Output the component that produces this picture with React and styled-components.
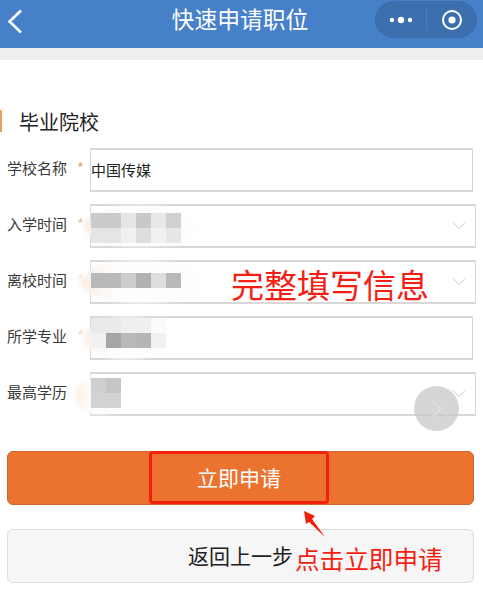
import React from "react";
import styled, { createGlobalStyle } from "styled-components";

const Global = createGlobalStyle`
  html, body { margin: 0; padding: 0; background: #fff; }
  body { font-family: "Noto Sans CJK SC", "Liberation Sans", sans-serif; }
`;

const Page = styled.div`
  position: relative;
  width: 483px;
  height: 604px;
  overflow: hidden;
  background: #fff;
`;

const Header = styled.header`
  height: 48px;
  background: #4580c8;
  display: flex;
  align-items: flex-start;
  justify-content: space-between;
  padding: 1px 6px 0 7px;
  box-sizing: border-box;
`;
const Back = styled.svg`
  width: 16px;
  height: 26px;
  margin-top: 8px;
`;
const Title = styled.h1`
  position: absolute;
  left: 0;
  right: 3px;
  top: 0;
  height: 38px;
  margin: 0;
  text-align: center;
  color: #fff;
  font-size: 22.8px;
  font-weight: 400;
  line-height: 37px;
`;
const Capsule = styled.div`
  width: 102px;
  height: 37px;
  border-radius: 19px;
  background: #3c6fae;
  display: grid;
  grid-template-columns: 51px 1px 50px;
  align-items: center;
  justify-items: center;
`;
const CapsuleRule = styled.span`
  width: 1px;
  height: 23px;
  background: #4d7db8;
`;
const Strip = styled.div`
  height: 12px;
  background: #eeeeee;
`;

const SectionTitle = styled.h2`
  margin: 50px 0 16px;
  height: 22px;
  border-left: 2px solid #e3a35c;
  padding-left: 17px;
  font-size: 20px;
  font-weight: 400;
  line-height: 24px;
  color: #222;
`;

const Form = styled.div`
  display: flex;
  flex-direction: column;
  gap: 12px;
`;
const Row = styled.div`
  display: flex;
  align-items: center;
  height: 44px;
  padding-left: 7px;
  position: relative;
`;
const Label = styled.label`
  width: 61px;
  margin-bottom: 4px;
  font-size: 15px;
  color: #3a3a3a;
  line-height: 20px;
  white-space: nowrap;
`;
const Star = styled.span`
  width: 22px;
  margin-bottom: 4px;
  padding-left: 9px;
  box-sizing: border-box;
  color: #e8a66f;
  opacity: ${(p) => p.$fade};
  font-size: 15px;
  line-height: 20px;
`;
const Field = styled.div`
  box-sizing: border-box;
  width: ${(p) => (p.$select ? 386 : 383)}px;
  height: 44px;
  border: 1px solid #d8d8d8;
  border-width: 2px 1px 2px 1px;
  background: #fff;
  padding: 0 0 2px 0;
  display: flex;
  align-items: center;
  justify-content: space-between;
  font-size: 15px;
  color: #222;
`;
const Chevron = styled.svg`
  width: 14px;
  height: 9px;
  margin-right: 9px;
`;

const Smudge = styled.div`
  position: absolute;
  left: ${(p) => p.$x}px;
  top: ${(p) => p.$y}px;
  width: ${(p) => p.$w}px;
  height: ${(p) => p.$h}px;
  border-radius: 50%;
  background: linear-gradient(90deg, #fbeee4 0, #fbf3ec 12%, #fdfdfd 30%);
  filter: blur(2px);
`;
const Mosaic = styled.div`
  position: absolute;
  left: 91px;
  top: ${(p) => p.$y}px;
  display: grid;
  grid-template-columns: repeat(${(p) => p.$cols}, 15px);
  grid-auto-rows: 15px;
  filter: blur(0.4px);
`;
const Cell = styled.i`
  display: block;
  background: ${(p) => p.$c};
`;

const Buttons = styled.div`
  margin: 35px 7px 0 7px;
  display: flex;
  flex-direction: column;
  gap: 24px;
`;
const Primary = styled.button`
  position: relative;
  height: 54px;
  width: 467px;
  border: 1px solid #c9662e;
  border-radius: 6px;
  background: #ec7230;
  color: #fff;
  font: inherit;
  font-size: 21px;
  padding: 0 3px 3px 0;
`;
const Secondary = styled.button`
  height: 54px;
  width: 467px;
  border: 1px solid #dcdcdc;
  border-radius: 6px;
  background: #f6f6f6;
  color: #222;
  font: inherit;
  font-size: 21px;
  padding: 0 0 3px 0;
`;

const Highlight = styled.div`
  position: absolute;
  left: 149px;
  top: 451px;
  width: 180px;
  height: 53px;
  box-sizing: border-box;
  border: 3px solid #f3200c;
  border-radius: 4px;
`;
const Note = styled.div`
  position: absolute;
  left: ${(p) => p.$x}px;
  top: ${(p) => p.$y}px;
  font-size: ${(p) => p.$size}px;
  line-height: 1.2;
  color: #f41e14;
  white-space: nowrap;
`;
const Arrow = styled.svg`
  position: absolute;
  left: 300px;
  top: 508px;
  width: 30px;
  height: 34px;
`;
const Fab = styled.div`
  position: absolute;
  left: 414px;
  top: 386px;
  width: 45px;
  height: 45px;
  border-radius: 50%;
  background: rgba(200, 200, 200, 0.75);
  display: flex;
  align-items: center;
  justify-content: center;
`;

const ChevronDown = () => (
  <Chevron viewBox="0 0 14 9">
    <path d="M1 1.5 L7 7.5 L13 1.5" fill="none" stroke="#c9c9c9" strokeWidth="1" />
  </Chevron>
);

const rows = [
  { label: "学校名称", star: 1, value: "中国传媒" },
  { label: "入学时间", star: 0.7, select: true },
  { label: "离校时间", star: 0.25, select: true },
  { label: "所学专业", star: 0.4 },
  { label: "最高学历", star: 0, select: true },
];

const mosaics = [
  { y: 213, cols: 6, cells: ["#cbcbcb", "#cbcbcb", "#e6e6e6", "#c9c9c9", "#e9e9e9", "#d0d0d0", "#e5e5e5", "#e5e5e5", "#f1f1f1", "#dddddd", "#f1f1f1", "#e7e7e7"] },
  { y: 273, cols: 6, cells: ["#b9b9b9", "#b9b9b9", "#cdcdcd", "#b1b1b1", "#dddddd", "#b9b9b9"] },
  { y: 318, cols: 5, cells: ["#eaeaea", "#eaeaea", "#efefef", "#efefef", "#fbfbfb", "#f1f1f1", "#a6a6a6", "#b9b9b9", "#b5b5b5", "#f1f1f1"] },
  { y: 378, cols: 2, cells: ["#cfcfcf", "#c6c6c6", "#d3d3d3", "#d3d3d3"] },
];

export default function App() {
  return (
    <Page>
      <Global />
      <Header>
        <Back viewBox="0 0 16 26">
          <path d="M14 1.5 L2.5 12.5 L14 23.5" fill="none" stroke="#fff" strokeWidth="2.6" />
        </Back>
        <Title>快速申请职位</Title>
        <Capsule>
          <svg width="24" height="8" viewBox="0 0 24 8">
            <circle cx="3" cy="4" r="2.2" fill="#fff" />
            <circle cx="12" cy="4" r="3.2" fill="#fff" />
            <circle cx="21" cy="4" r="2.2" fill="#fff" />
          </svg>
          <CapsuleRule />
          <svg width="22" height="22" viewBox="0 0 22 22">
            <circle cx="11" cy="11" r="9" fill="none" stroke="#fff" strokeWidth="2" />
            <circle cx="11" cy="11" r="3.6" fill="#fff" />
          </svg>
        </Capsule>
      </Header>
      <Strip />
      <SectionTitle>毕业院校</SectionTitle>
      <Form>
        {rows.map((r) => (
          <Row key={r.label}>
            <Label>{r.label}</Label>
            <Star $fade={r.star}>*</Star>
            <Field $select={r.select}>
              <span>{r.value || ""}</span>
              {r.select ? <ChevronDown /> : null}
            </Field>
          </Row>
        ))}
      </Form>
      <Buttons>
        <Primary>立即申请</Primary>
        <Secondary>返回上一步</Secondary>
      </Buttons>

      <Smudge $x={84} $y={206} $w={112} $h={40} />
      <Smudge $x={80} $y={261} $w={122} $h={42} />
      <Smudge $x={84} $y={317} $w={84} $h={42} />
      <Smudge $x={75} $y={378} $w={48} $h={36} />
      {mosaics.map((m) => (
        <Mosaic key={m.y} $y={m.y} $cols={m.cols}>
          {m.cells.map((c, i) => (
            <Cell key={i} $c={c} />
          ))}
        </Mosaic>
      ))}

      <Note $x={231} $y={265} $size={33}>完整填写信息</Note>
      <Fab>
        <svg width="12" height="18" viewBox="0 0 12 18">
          <path d="M2 2 L10 9 L2 16" fill="none" stroke="#e2e2e2" strokeWidth="1.2" />
        </svg>
      </Fab>
      <Highlight />
      <Arrow viewBox="0 0 30 34">
        <path d="M4 3 L15 8 L12 11 L25 29 L9 14 L6 16 Z" fill="#f3200c" />
      </Arrow>
      <Note $x={295} $y={544} $size={24.6}>点击立即申请</Note>
    </Page>
  );
}
